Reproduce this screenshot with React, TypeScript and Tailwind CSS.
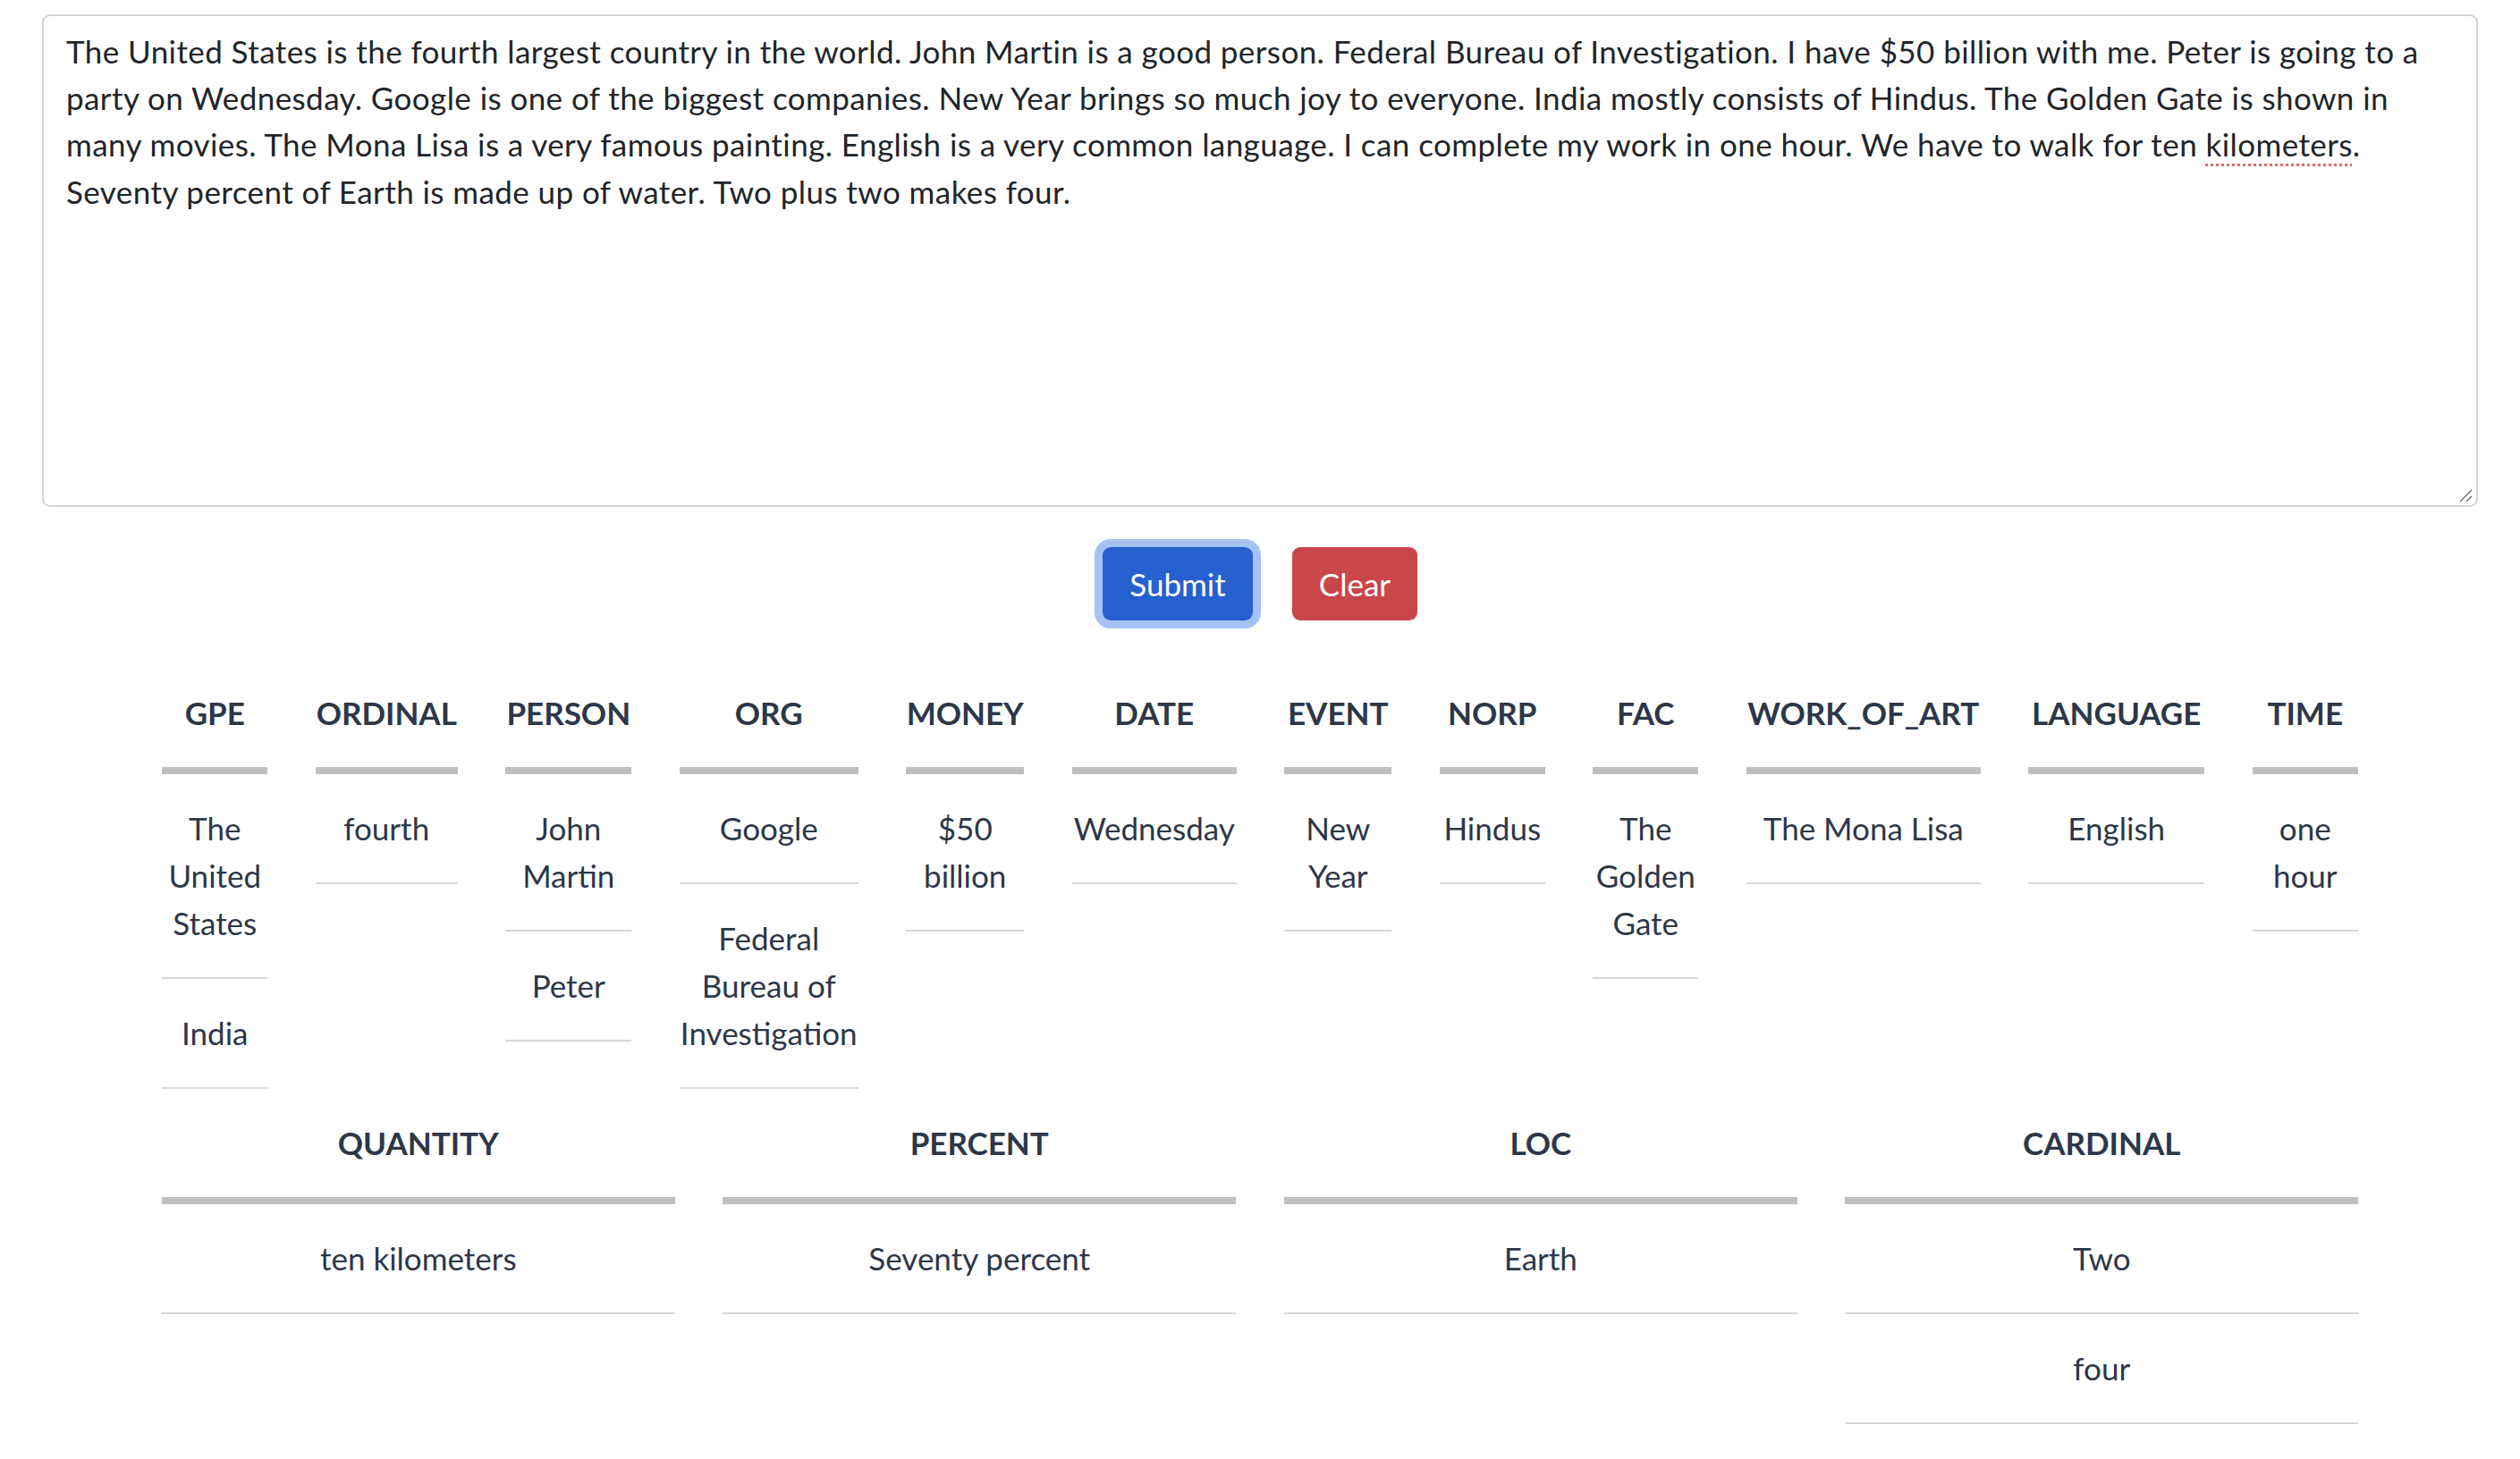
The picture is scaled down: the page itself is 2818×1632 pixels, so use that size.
import React from "react";

type Col = { h: string; w: string; items: string[] };

const table1: Col[] = [
  { h: "GPE", w: "w-[118px]", items: ["The United States", "India"] },
  { h: "ORDINAL", w: "w-[159px]", items: ["fourth"] },
  { h: "PERSON", w: "w-[141px]", items: ["John Martin", "Peter"] },
  { h: "ORG", w: "w-[200px]", items: ["Google", "Federal Bureau of Investigation"] },
  { h: "MONEY", w: "w-[132px]", items: ["$50 billion"] },
  { h: "DATE", w: "w-[184px]", items: ["Wednesday"] },
  { h: "EVENT", w: "w-[120px]", items: ["New Year"] },
  { h: "NORP", w: "w-[118px]", items: ["Hindus"] },
  { h: "FAC", w: "w-[118px]", items: ["The Golden Gate"] },
  { h: "WORK_OF_ART", w: "w-[262px]", items: ["The Mona Lisa"] },
  { h: "LANGUAGE", w: "w-[197px]", items: ["English"] },
  { h: "TIME", w: "w-[118px]", items: ["one hour"] },
];

const table2: Col[] = [
  { h: "QUANTITY", w: "w-[574px]", items: ["ten kilometers"] },
  { h: "PERCENT", w: "w-[574px]", items: ["Seventy percent"] },
  { h: "LOC", w: "w-[574px]", items: ["Earth"] },
  { h: "CARDINAL", w: "w-[574px]", items: ["Two", "four"] },
];

function Column({ col }: { col: Col }) {
  return (
    <div className={`${col.w} shrink-0 text-center`}>
      <div className="whitespace-nowrap border-b-8 border-[#bfbfbf] py-[34px] font-bold text-[#2d3748]">
        {col.h}
      </div>
      {col.items.map((t, i) => (
        <div key={i} className="border-b-2 border-[#d3d8db] py-[34px] text-[#2d3748]">
          {t}
        </div>
      ))}
    </div>
  );
}

function EntityTable({ cols }: { cols: Col[] }) {
  return (
    <div className="flex items-start justify-center gap-[53.5px]">
      {cols.map((c) => (
        <Column key={c.h} col={c} />
      ))}
    </div>
  );
}

export default function App() {
  return (
    <div className="min-h-screen bg-white pt-[16px] font-[Lato,sans-serif] text-[35px] leading-[53px]">
      <div className="relative mx-[47px] h-[551px] rounded-[9px] border-2 border-[#cfd4d9] px-[25px] pt-[13px] leading-[52.2px] tracking-[0.42px] text-[#212529]">
        <div className="whitespace-nowrap">
          The United States is the fourth largest country in the world. John Martin is a good person. Federal Bureau of Investigation. I have $50 billion with me. Peter is going to a
        </div>
        <div className="whitespace-nowrap">
          party on Wednesday. Google is one of the biggest companies. New Year brings so much joy to everyone. India mostly consists of Hindus. The Golden Gate is shown in
        </div>
        <div className="whitespace-nowrap">
          many movies. The Mona Lisa is a very famous painting. English is a very common language. I can complete my work in one hour. We have to walk for ten{" "}
          <span className="underline decoration-[#e06b67] decoration-dotted decoration-[3px] underline-offset-[8px]">kilometers</span>.
        </div>
        <div className="whitespace-nowrap">
          Seventy percent of Earth is made up of water. Two plus two makes four.
        </div>
        <svg
          className="absolute bottom-[3px] right-[4px]"
          width="16"
          height="16"
          viewBox="0 0 16 16"
        >
          <line x1="2" y1="15" x2="15" y2="2" stroke="#6b6b6b" strokeWidth="1.5" />
          <line x1="9" y1="15" x2="15" y2="9" stroke="#6b6b6b" strokeWidth="1.5" />
        </svg>
      </div>

      <div className="mt-[45px] flex justify-center gap-[44px]">
        <button className="h-[82px] w-[168px] rounded-[9px] bg-[#2660ce] text-white ring-[9px] ring-[#a5c2f4]">
          Submit
        </button>
        <button className="h-[82px] w-[140px] rounded-[9px] bg-[#c9464b] text-white">
          Clear
        </button>
      </div>

      <div className="mt-[43px]">
        <EntityTable cols={table1} />
        <EntityTable cols={table2} />
      </div>
    </div>
  );
}
